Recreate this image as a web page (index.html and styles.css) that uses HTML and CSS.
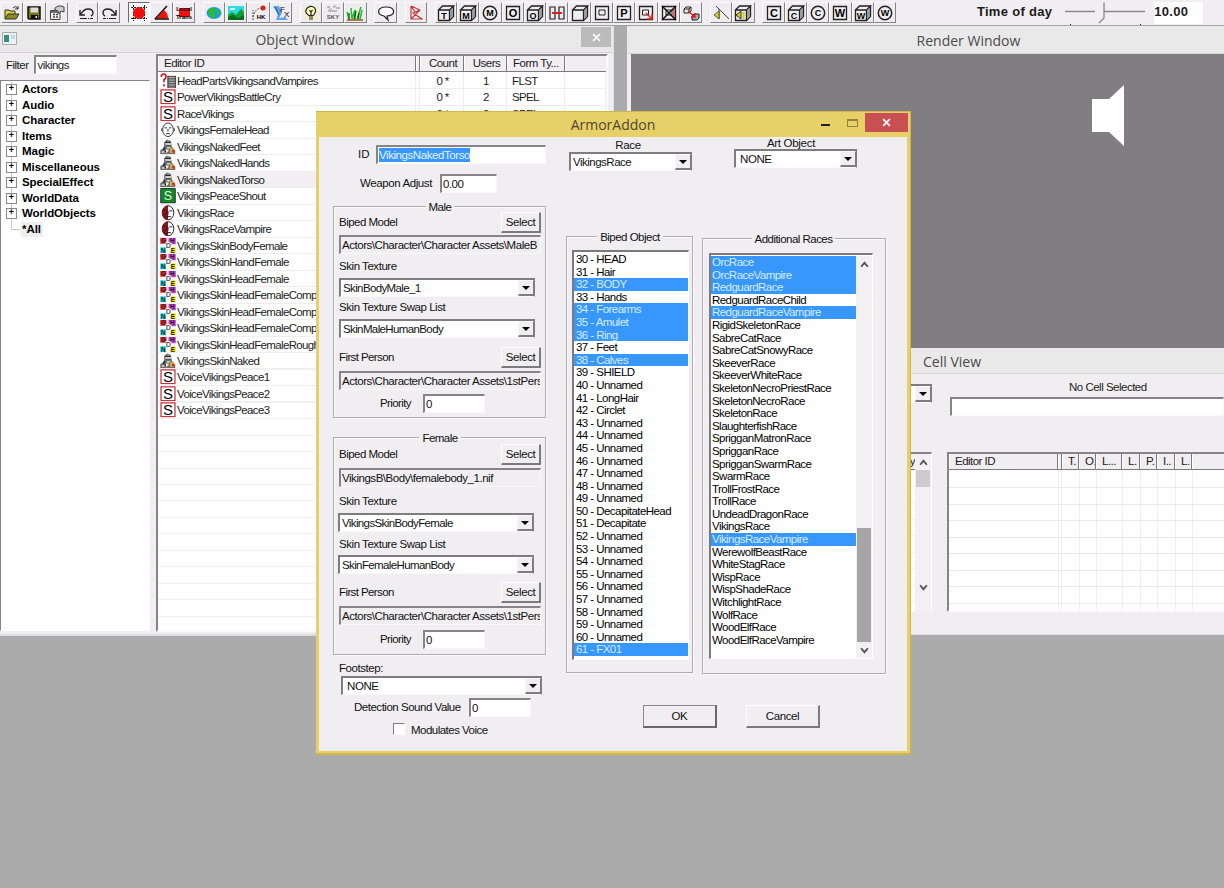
FILE: index.html
```html
<!DOCTYPE html>
<html lang="en">

<head>
    <meta charset="UTF-8">
    <meta name="viewport" content="width=device-width, initial-scale=1.0">
    <title>Creation Kit</title>
    <link rel="stylesheet" href="styles.css">
</head>

<body>
    <svg class="sprite">
        <symbol id="i-cube" viewBox="0 0 18 18"><path d="M1.500 6h11v10.500h-11zM1.500 6l4-4h11l-4 4M16.500 2v10.500l-4 4" fill="#eee" stroke="#222" stroke-width="1.300"/><path d="M13 6.500l3-3v8.500l-3 3z" fill="#999"/></symbol>
        <symbol id="i-box" viewBox="0 0 18 18"><path d="M2.500 2.500h13v13h-13z" fill="#eee" stroke="#222" stroke-width="1.300"/></symbol>
        <symbol id="i-ring" viewBox="0 0 18 18"><circle cx="9" cy="9" r="6.700" fill="#eee" stroke="#222" stroke-width="1.500"/></symbol>
        <symbol id="i-power" viewBox="0 0 16 16"><path d="M.8.800h14.400v14.400H.8z" fill="#fff" stroke="#c8323c" stroke-width="1.300"/><text x="8" y="13.500" font-size="15.500" text-anchor="middle">S</text></symbol>
        <symbol id="i-armor" viewBox="0 0 16 16"><path d="M0 15.500v-4l4-3V3l3-2.500L11 2l1 6 3.500 4v3.500z" fill="#6c6c6c"/><path d="M5 5l3-3.500L11 4v4l-3 3z" fill="#ccc"/><path d="M5.500 3.500h5M6 7h5M3 11l4 3M4 8v3" stroke="#222" stroke-width="1.300"/><path d="M1.500 12.500l3-1v3h-3z" fill="#bbb"/><path d="M6 10l3 2-3 3z" fill="#eee"/><path d="M10 9.500h4v5h-4z" fill="#d9b33c"/><path d="M12 11h2.500v3H12z" fill="#c33"/></symbol>
        <symbol id="i-race" viewBox="0 0 16 16"><ellipse cx="8" cy="8" rx="6" ry="7.300" fill="#fff" stroke="#222"/><path d="M8 .7C0 1 0 15 8 15.300z" fill="#8c1016"/><path d="M3.500 5l3 1M9.500 6h3M6 12h5M8 6v4M4 12l2-4" stroke="#222"/></symbol>
        <symbol id="i-tex" viewBox="0 0 16 16"><path d="M0 0h6.500v6H0z" fill="#e8202c"/><path d="M8.500 0H16v6.500H8.500z" fill="#c23ad0"/><path d="M0 9.500h6V16H0z" fill="#1fd8e8"/><path d="M10 9.500h6V16h-6z" fill="#f4e61c"/><path d="M5.500 4h6v7.500h-6z" fill="#fff"/><g font-size="6.500" font-weight="bold" text-anchor="middle" fill="#222"><text x="3" y="5.300">G</text><text x="12.500" y="5.500">H</text><text x="8.500" y="10" fill="#556" font-size="7.500">D</text><text x="3" y="15">N</text><text x="13" y="15">E</text></g></symbol>
        <symbol id="i-head" viewBox="0 0 16 16"><ellipse cx="8" cy="8" rx="5.500" ry="7" fill="#fff" stroke="#333"/><path d="M4.500 6h2.500M9 6h2.500M8 7v3M6 12h4M1.500 6.500v3M14.500 6.500v3" stroke="#333"/></symbol>
        <symbol id="i-list" viewBox="0 0 16 16"><path d="M7.500 3H16v13H7.500z" fill="#b5b5b5"/><path d="M7.500 3.500H16M7.500 6H16M7.500 8.500H16M7.500 11H16M7.500 13.500H16M7.500 15.500H16M8 3v13M15.500 3v13" stroke="#3a3a3a"/><path d="M1 4q0-3 2.500-3T6 3.500q0 2-2.200 3.500v2.500M3.800 11.500V14" fill="none" stroke="#e2141c" stroke-width="1.700"/></symbol>
        <symbol id="i-shout" viewBox="0 0 16 16"><path d="M.5.500h15v15H.5z" fill="#128a24" stroke="#234"/><text x="8" y="12.500" font-size="13" fill="#e8f5e8" text-anchor="middle">S</text></symbol>
    </svg>

    <div class="toolbar">
        <div class="tools">
            <button><svg viewBox="0 0 18 18"><path d="M2 15V6h4l1 1h5v3" fill="#d8d040" stroke="#333"/><path d="M2 15l3-5h11l-3 5z" fill="#8d8a20" stroke="#333"/><path d="M10 4q3-3 5 1M15 2v3h-3" fill="none" stroke="#333"/></svg></button>
            <button><svg viewBox="0 0 18 18"><path d="M3 3h12v12H4l-1-1z" fill="#777418" stroke="#111" stroke-width="1.500"/><path d="M5.500 3.500h7.500v5H5.500z" fill="#ddd"/><path d="M6 11h7v4H6z" fill="#111"/><path d="M10.500 12h1.500v2h-1.500z" fill="#eee"/></svg></button>
            <button><svg viewBox="0 0 18 18"><path d="M2.500 6.500h9.500v9H2.500z" fill="#eee" stroke="#444"/><path d="M3 8h9M5 10.500h2M8 10.500h2M5 13h2M8 13h2" stroke="#444" stroke-width="1.400"/><path d="M7 4l3-2h3l3 1v5l-3-1-2 3-1-3-3-1z" fill="#ccc" stroke="#444"/></svg></button>
        </div>
        <div class="tools">
            <button><svg viewBox="0 0 18 18"><path d="M2 6v5h5M3 10q3-5 7-5 5 0 5 4 0 2-2 3" fill="none" stroke="#222" stroke-width="1.400"/><path d="M2 14.500h13" stroke="#222" stroke-dasharray="7 1 1 1"/></svg></button>
            <button><svg viewBox="0 0 18 18"><path d="M16 6v5h-5M15 10q-3-5-7-5-5 0-5 4 0 2 2 3" fill="none" stroke="#222" stroke-width="1.400"/><path d="M16 14.500H3" stroke="#222" stroke-dasharray="7 1 1 1"/></svg></button>
        </div>
        <div class="tools">
            <button class="pressed"><svg viewBox="0 0 18 18"><path d="M3.500 1v16M14.500 1v16M1 3.500h16M1 14.500h16" stroke="#222" stroke-dasharray="2 1"/><circle cx="9" cy="9" r="6" fill="#f11010"/></svg></button>
            <button><svg viewBox="0 0 18 18"><path d="M2 15L14 2" stroke="#111" stroke-width="1.500"/><path d="M3 14.500L11 6q4 3 4 8.500z" fill="#f11010"/><path d="M2 15h14" stroke="#111" stroke-width="1.500"/></svg></button>
            <button><svg viewBox="0 0 18 18"><path d="M4 4h11v9H4z" fill="#f11010"/><text x="9" y="7" class="tiny">Local</text><text x="9" y="15" class="tiny">Trans</text></svg></button>
        </div>
        <div class="tools">
            <button><svg viewBox="0 0 18 18"><ellipse cx="9" cy="9" rx="7.500" ry="6" fill="#2597dc"/><path d="M3 6l4-2 4 1-2 4 1 3-2 3-3-3zM12 6l3 1v4l-3-2z" fill="#25c322"/></svg></button>
            <button><svg viewBox="0 0 18 18"><path d="M1 2h16v14H1z" fill="#2bdde0"/><path d="M3 4h5v2H3z" fill="#d8ffff"/><path d="M1 11l4-3 4 3 5-6 3 3v8H1z" fill="#169a34"/><path d="M1 13l5-2 5 3 6-3v5H1z" fill="#0b6b1c"/></svg></button>
            <button><svg viewBox="0 0 18 18"><path d="M3 16V6M3 13q2-9 9-9" fill="none" stroke="#555" stroke-dasharray="2 1"/><circle cx="13" cy="4" r="2.500" fill="#e01818"/><text x="11" y="15" class="tiny">HK</text></svg></button>
            <button><svg viewBox="0 0 18 18"><path d="M1 2h6l3 7-3 5 6-1 3 3H4l2-6z" fill="#5ea6e6"/><path d="M3 3l4 8" stroke="#2869c4" stroke-width="1.500"/><text x="8" y="8" font-size="8">F</text><text x="12" y="13" font-size="8">X</text></svg></button>
        </div>
        <div class="tools">
            <button><svg viewBox="0 0 18 18"><path d="M9 1v16M1 8h16M3 3l12 12M15 3L3 15" stroke="#f4ef8a" stroke-width="1.500"/><path d="M7 11.500q-4-2.500-3-5.500 2-4 6-3.500 4 1 3.500 5-.5 2.500-2.500 4z" fill="#fbf7b4" stroke="#222" stroke-width="1.200"/><path d="M7 13h4M7 15h4M7.500 6l1.500 2 1.500-2M9 8v4" fill="none" stroke="#222" stroke-width="1.200"/></svg></button>
            <button><svg viewBox="0 0 18 18"><path d="M3 3h3M9 3l3-1M12 4h4M5 5l3 1M4 7h9" stroke="#bbb" stroke-width="2"/><text x="9" y="15" class="tiny" fill="#555">SKY</text></svg></button>
            <button><svg viewBox="0 0 18 18"><path d="M1 8l2 7M5 4l1 11 3-9v9M11 15l4-12M14 15l2-9" fill="none" stroke="#26b82a" stroke-width="1.500"/><path d="M3 16V9M8 16l2-9M12 16l1-7" stroke="#0a6d14" stroke-width="1.400"/><path d="M1 16h16" stroke="#9b5a20" stroke-width="1.500"/></svg></button>
        </div>
        <div class="tools">
            <button><svg viewBox="0 0 18 18"><path d="M9 3c10 0 10 9 1 9l1 4-4-4C-1 11 0 3 9 3z" fill="#fff" stroke="#222" stroke-width="1.200"/></svg></button>
        </div>
        <div class="tools">
            <button><svg viewBox="0 0 18 18"><path d="M4 2v13h12M4 2l9 4M4 15l9-9-7 3 9 6M4 2l4 6" fill="none" stroke="#c23a3a" stroke-width="1.200"/></svg></button>
        </div>
        <div class="tools">
            <button><svg viewBox="0 0 18 18"><use href="#i-cube"/><text x="7" y="14.500">T</text></svg></button>
            <button><svg viewBox="0 0 18 18"><use href="#i-cube"/><text x="7" y="14.500">M</text></svg></button>
            <button><svg viewBox="0 0 18 18"><use href="#i-ring"/><text x="9" y="12.300">M</text></svg></button>
            <button><svg viewBox="0 0 18 18"><use href="#i-box"/><text x="9" y="13" class="big">O</text></svg></button>
            <button><svg viewBox="0 0 18 18"><use href="#i-cube"/><text x="7" y="14.500">O</text></svg></button>
            <button><svg viewBox="0 0 18 18"><path d="M2 3h5v12H2zM11 3h5v12h-5z" fill="#eee" stroke="#222" stroke-width="1.200"/><path d="M4 9h10" stroke="#e02020" stroke-width="2"/></svg></button>
            <button><svg viewBox="0 0 18 18"><use href="#i-cube"/></svg></button>
            <button><svg viewBox="0 0 18 18"><use href="#i-box"/><path d="M6 6h6v5H6z" fill="none" stroke="#222"/></svg></button>
            <button><svg viewBox="0 0 18 18"><use href="#i-box"/><text x="9" y="13" class="big">P</text></svg></button>
            <button><svg viewBox="0 0 18 18"><use href="#i-box"/><path d="M5.500 6h6v5h-6z" fill="none" stroke="#222"/><path d="M9 9l6 6M15 10v5h-5" fill="none" stroke="#e02020" stroke-width="1.400"/></svg></button>
            <button><svg viewBox="0 0 18 18"><use href="#i-box"/><path d="M6 6h6v5H6z" fill="none" stroke="#222"/><path d="M14 5v9" stroke="#d66" stroke-width="2"/><path d="M2 2l14 14M16 2L2 16" stroke="#111" stroke-width="1.500"/></svg></button>
            <button><svg viewBox="0 0 18 18"><path d="M2 5l2-2h5v4L7 9H2zM2 5h5v4M7 5l2-2" fill="#eee" stroke="#222"/><path d="M10 12l2-2h5v4l-2 2h-5z" fill="#aaa" stroke="#222"/><path d="M6 7l7 6M13 9v4H9" fill="none" stroke="#e02020" stroke-width="1.400"/></svg></button>
        </div>
        <div class="tools">
            <button><svg viewBox="0 0 18 18"><path d="M4 2l13 13M7 5v10" stroke="#444"/><path d="M2 11l5-4v8z" fill="#d8cb1c" stroke="#333" stroke-width=".7"/></svg></button>
            <button><svg viewBox="0 0 18 18"><use href="#i-cube"/><path d="M2 11l5-4v8z" fill="#d8cb1c" stroke="#333"/><path d="M9.500 8v7" stroke="#d8cb1c" stroke-width="2"/></svg></button>
        </div>
        <div class="tools">
            <button><svg viewBox="0 0 18 18"><use href="#i-box"/><text x="9" y="13" class="big">C</text></svg></button>
            <button><svg viewBox="0 0 18 18"><use href="#i-cube"/><text x="7" y="14.500">C</text></svg></button>
            <button><svg viewBox="0 0 18 18"><use href="#i-ring"/><text x="9" y="12.300">C</text></svg></button>
            <button><svg viewBox="0 0 18 18"><use href="#i-box"/><text x="9" y="13" class="big">W</text></svg></button>
            <button><svg viewBox="0 0 18 18"><use href="#i-cube"/><text x="7" y="14.500">W</text></svg></button>
            <button><svg viewBox="0 0 18 18"><use href="#i-ring"/><text x="9" y="12.300">W</text></svg></button>
        </div>
        <div class="time">
            <span>Time of day</span>
            <svg class="slider" viewBox="0 0 80 25"><path d="M0 11.500h80" stroke="#8a8a8a" stroke-width="1.500"/><path d="M5.500 24v1M75.500 24v1" stroke="#222"/><path d="M30 2.500h9V18l-5 5-4-4z" fill="#f0eff1"/><path d="M39 2.500V18l-5 5" fill="none" stroke="#888" stroke-width="1.300"/></svg>
            <span class="timeValue">10.00</span>
        </div>
    </div>

    <!-- object window -->
    <div class="window objectWindow">
        <div class="titlebar">
            <svg class="appIcon" viewBox="0 0 15 13"><path d="M.5.500h14v12H.5z" fill="#eaf3f3" stroke="#aaa"/><path d="M2 3h5v7H2z" fill="#3c8c84"/><path d="M9 3h4v4H9z" fill="#c5d5e6"/></svg>
            <span>Object Window</span>
            <button class="closeGray"><svg viewBox="0 0 8 8"><path d="M1 1l6 6M7 1L1 7" stroke="#fff" stroke-width="1.300"/></svg></button>
        </div>
        <div class="objectBody">
            <div class="side">
                <label class="filter">Filter <input type="text" value="vikings"></label>
                <ul class="tree">
                    <li>Actors</li>
                    <li>Audio</li>
                    <li>Character</li>
                    <li>Items</li>
                    <li>Magic</li>
                    <li>Miscellaneous</li>
                    <li>SpecialEffect</li>
                    <li>WorldData</li>
                    <li>WorldObjects</li>
                    <li class="all"><span>*All</span></li>
                </ul>
            </div>
            <div class="grid objects">
                <div class="row head"><span>Editor ID</span><span></span><span>Count</span><span>Users</span><span>Form Ty...</span><span></span></div>
                <div class="row"><span><svg><use href="#i-list"/></svg>HeadPartsVikingsandVampires</span><span></span><span>0 *</span><span>1</span><span>FLST</span><span></span></div>
                <div class="row"><span><svg><use href="#i-power"/></svg>PowerVikingsBattleCry</span><span></span><span>0 *</span><span>2</span><span>SPEL</span><span></span></div>
                <div class="row"><span><svg><use href="#i-power"/></svg>RaceVikings</span><span></span><span>0 *</span><span>2</span><span>SPEL</span><span></span></div>
                <div class="row"><span><svg><use href="#i-head"/></svg>VikingsFemaleHead</span></div>
                <div class="row"><span><svg><use href="#i-armor"/></svg>VikingsNakedFeet</span></div>
                <div class="row"><span><svg><use href="#i-armor"/></svg>VikingsNakedHands</span></div>
                <div class="row current"><span><svg><use href="#i-armor"/></svg>VikingsNakedTorso</span></div>
                <div class="row"><span><svg><use href="#i-shout"/></svg>VikingsPeaceShout</span></div>
                <div class="row"><span><svg><use href="#i-race"/></svg>VikingsRace</span></div>
                <div class="row"><span><svg><use href="#i-race"/></svg>VikingsRaceVampire</span></div>
                <div class="row"><span><svg><use href="#i-tex"/></svg>VikingsSkinBodyFemale</span></div>
                <div class="row"><span><svg><use href="#i-tex"/></svg>VikingsSkinHandFemale</span></div>
                <div class="row"><span><svg><use href="#i-tex"/></svg>VikingsSkinHeadFemale</span></div>
                <div class="row"><span><svg><use href="#i-tex"/></svg>VikingsSkinHeadFemaleComp</span></div>
                <div class="row"><span><svg><use href="#i-tex"/></svg>VikingsSkinHeadFemaleComp</span></div>
                <div class="row"><span><svg><use href="#i-tex"/></svg>VikingsSkinHeadFemaleComp</span></div>
                <div class="row"><span><svg><use href="#i-tex"/></svg>VikingsSkinHeadFemaleRough</span></div>
                <div class="row"><span><svg><use href="#i-armor"/></svg>VikingsSkinNaked</span></div>
                <div class="row"><span><svg><use href="#i-power"/></svg>VoiceVikingsPeace1</span></div>
                <div class="row"><span><svg><use href="#i-power"/></svg>VoiceVikingsPeace2</span></div>
                <div class="row"><span><svg><use href="#i-power"/></svg>VoiceVikingsPeace3</span></div>
            </div>
        </div>
    </div>

    <!-- render window -->
    <div class="window renderWindow">
        <div class="titlebar"><span>Render Window</span></div>
        <div class="viewport">
            <svg class="speaker" viewBox="0 0 32 61"><path d="M0 14h17L32 0v61L17 47H0z" fill="#fff"/></svg>
        </div>
    </div>

    <!-- cell view -->
    <div class="window cellWindow">
        <div class="titlebar"><span>Cell View</span></div>
        <div class="cellBody">
            <div class="worlds">
                <div class="combo"><span></span><i></i></div>
                <div class="worldList">
                    <div class="worldRows"><div class="worldHead">y</div></div>
                    <div class="scroll">
                        <svg viewBox="0 0 8 6"><path d="M1 5l3-3.500L7 5"/></svg>
                        <div class="thumb"></div>
                        <svg viewBox="0 0 8 6"><path d="M1 1l3 3.500L7 1"/></svg>
                    </div>
                </div>
            </div>
            <div class="cells">
                <div class="noCell">No Cell Selected</div>
                <input type="text">
                <div class="grid refs">
                    <div class="row head"><span>Editor ID</span><span></span><span>T.</span><span>O.</span><span>L...</span><span>L.</span><span>P.</span><span>I..</span><span>L.</span><span></span></div>
                </div>
            </div>
        </div>
    </div>

    <!-- armor addon dialog -->
    <div class="dialog">
        <div class="dialogTitle">
            <span>ArmorAddon</span>
            <div class="caption">
                <i class="min"></i>
                <i class="max"></i>
                <button class="close"><svg viewBox="0 0 8 8"><path d="M1 1l6 6M7 1L1 7" stroke="#fff" stroke-width="1.500"/></svg></button>
            </div>
        </div>
        <div class="client">
            <div class="left">
                <div class="line idLine"><label>ID</label><div class="field"><mark>VikingsNakedTorso</mark></div></div>
                <div class="line weapon"><label>Weapon Adjust</label><input type="text" value="0.00"></div>

                <div class="group male">
                    <div class="legend"><span>Male</span></div>
                    <div class="pick"><span>Biped Model</span><button>Select</button></div>
                    <div class="path">Actors\Character\Character Assets\MaleB</div>
                    <div class="caps">Skin Texture</div>
                    <div class="combo"><span>SkinBodyMale_1</span><i></i></div>
                    <div class="caps swap">Skin Texture Swap List</div>
                    <div class="combo"><span>SkinMaleHumanBody</span><i></i></div>
                    <div class="pick first"><span>First Person</span><button>Select</button></div>
                    <div class="path">Actors\Character\Character Assets\1stPers</div>
                    <div class="line priority"><label>Priority</label><input type="text" value="0"></div>
                </div>

                <div class="group female">
                    <div class="legend"><span>Female</span></div>
                    <div class="pick"><span>Biped Model</span><button>Select</button></div>
                    <div class="path">VikingsB\Body\femalebody_1.nif</div>
                    <div class="caps">Skin Texture</div>
                    <div class="combo"><span>VikingsSkinBodyFemale</span><i></i></div>
                    <div class="caps swap">Skin Texture Swap List</div>
                    <div class="combo"><span>SkinFemaleHumanBody</span><i></i></div>
                    <div class="pick first"><span>First Person</span><button>Select</button></div>
                    <div class="path">Actors\Character\Character Assets\1stPers</div>
                    <div class="line priority"><label>Priority</label><input type="text" value="0"></div>
                </div>

                <div class="caps footCaps">Footstep:</div>
                <div class="combo foot"><span>NONE</span><i></i></div>
                <div class="line detect"><label>Detection Sound Value</label><input type="text" value="0"></div>
                <div class="line voice"><b class="check"></b><label>Modulates Voice</label></div>
            </div>

            <div class="right">
                <div class="lists">
                    <div class="mid">
                        <div class="caps">Race</div>
                        <div class="combo"><span>VikingsRace</span><i></i></div>
                        <div class="group biped">
                            <div class="legend"><span>Biped Object</span></div>
                            <ul class="listbox">
                                <li>30 - HEAD</li>
                                <li>31 - Hair</li>
                                <li class="on">32 - BODY</li>
                                <li>33 - Hands</li>
                                <li class="on">34 - Forearms</li>
                                <li class="on">35 - Amulet</li>
                                <li class="on">36 - Ring</li>
                                <li>37 - Feet</li>
                                <li class="on">38 - Calves</li>
                                <li>39 - SHIELD</li>
                                <li>40 - Unnamed</li>
                                <li>41 - LongHair</li>
                                <li>42 - Circlet</li>
                                <li>43 - Unnamed</li>
                                <li>44 - Unnamed</li>
                                <li>45 - Unnamed</li>
                                <li>46 - Unnamed</li>
                                <li>47 - Unnamed</li>
                                <li>48 - Unnamed</li>
                                <li>49 - Unnamed</li>
                                <li>50 - DecapitateHead</li>
                                <li>51 - Decapitate</li>
                                <li>52 - Unnamed</li>
                                <li>53 - Unnamed</li>
                                <li>54 - Unnamed</li>
                                <li>55 - Unnamed</li>
                                <li>56 - Unnamed</li>
                                <li>57 - Unnamed</li>
                                <li>58 - Unnamed</li>
                                <li>59 - Unnamed</li>
                                <li>60 - Unnamed</li>
                                <li class="on">61 - FX01</li>
                            </ul>
                        </div>
                    </div>
                    <div class="far">
                        <div class="caps">Art Object</div>
                        <div class="combo"><span>NONE</span><i></i></div>
                        <div class="group races">
                            <div class="legend"><span>Additional Races</span></div>
                            <div class="listbox">
                                <ul>
                                    <li class="on">OrcRace</li>
                                    <li class="on">OrcRaceVampire</li>
                                    <li class="on">RedguardRace</li>
                                    <li>RedguardRaceChild</li>
                                    <li class="on">RedguardRaceVampire</li>
                                    <li>RigidSkeletonRace</li>
                                    <li>SabreCatRace</li>
                                    <li>SabreCatSnowyRace</li>
                                    <li>SkeeverRace</li>
                                    <li>SkeeverWhiteRace</li>
                                    <li>SkeletonNecroPriestRace</li>
                                    <li>SkeletonNecroRace</li>
                                    <li>SkeletonRace</li>
                                    <li>SlaughterfishRace</li>
                                    <li>SprigganMatronRace</li>
                                    <li>SprigganRace</li>
                                    <li>SprigganSwarmRace</li>
                                    <li>SwarmRace</li>
                                    <li>TrollFrostRace</li>
                                    <li>TrollRace</li>
                                    <li>UndeadDragonRace</li>
                                    <li>VikingsRace</li>
                                    <li class="on">VikingsRaceVampire</li>
                                    <li>WerewolfBeastRace</li>
                                    <li>WhiteStagRace</li>
                                    <li>WispRace</li>
                                    <li>WispShadeRace</li>
                                    <li>WitchlightRace</li>
                                    <li>WolfRace</li>
                                    <li>WoodElfRace</li>
                                    <li>WoodElfRaceVampire</li>
                                </ul>
                                <div class="scroll">
                                    <svg viewBox="0 0 8 6"><path d="M1 5l3-3.500L7 5"/></svg>
                                    <div class="thumb"></div>
                                    <svg viewBox="0 0 8 6"><path d="M1 1l3 3.500L7 1"/></svg>
                                </div>
                            </div>
                        </div>
                    </div>
                </div>
                <div class="buttons">
                    <button class="ok">OK</button>
                    <button>Cancel</button>
                </div>
            </div>
        </div>
    </div>
</body>

</html>
```
FILE: styles.css
```css
* {
    margin: 0;
    padding: 0;
    box-sizing: border-box;
}

body {
    width: 1224px;
    height: 888px;
    overflow: hidden;
    position: relative;
    background-color: #ababab;
    color: #1c1c1c;
    font-family: "Liberation Sans", Arial, sans-serif;
    font-size: 11.5px;
    letter-spacing: -0.52px;
    white-space: nowrap;
}

ul {
    list-style: none;
}

input,
button {
    font: inherit;
    letter-spacing: inherit;
    color: inherit;
    border-radius: 0;
}

.sprite {
    display: none;
}

input,
.field,
.path {
    height: 19px;
    padding: 0 1px;
    background-color: #fff;
    border: 2px solid;
    border-color: #868487 #f8f8f8 #f8f8f8 #868487;
    border-right-width: 1px;
    border-bottom-width: 1px;
    line-height: 16px;
    outline: none;
}

/* toolbar */
.toolbar {
    height: 26px;
    display: flex;
    gap: 7.8px;
    padding: 2px 0 0 1px;
    background-color: #f0eef1;
    border-bottom: 1px solid #a2a0a3;
}

.tools {
    display: flex;
}

.tools button {
    width: 22.3px;
    height: 21px;
    display: flex;
    align-items: center;
    justify-content: center;
    background-color: #eeecef;
    border: 1px solid;
    border-color: #fcfcfc #858386 #858386 #fcfcfc;
    border-right-width: 1.5px;
    border-bottom-width: 1.5px;
}

.tools .pressed {
    background-color: #f7f6f7;
    border-color: #6f6d70 #fff #fff #6f6d70;
}

.tools svg {
    width: 18px;
    height: 18px;
    flex: none;
}

.tools text {
    letter-spacing: 0;
}

.tools text:not([font-size]) {
    font-size: 9px;
    font-weight: bold;
    text-anchor: middle;
}

.tools text.big {
    font-size: 11px;
}

.tools text.tiny {
    font-size: 6px;
}

.time {
    display: flex;
    margin: -2px 0 0 73px;
    font-size: 13px;
    font-weight: bold;
    letter-spacing: 0.3px;
    line-height: 23px;
}

.slider {
    width: 80px;
    height: 25px;
    margin: 0 9px 0 13px;
}

.timeValue {
    width: 49px;
    margin-top: 2px;
    height: 22px;
    line-height: 19px;
    background-color: #fff;
}

/* windows */
.window {
    position: absolute;
    background-color: #f0eef1;
}

.titlebar {
    height: 27px;
    position: relative;
    background-color: #eae9ea;
    border-bottom: 1px solid #d5d4d5;
    color: #4b4a4b;
    font-family: "Open Sans", sans-serif;
    font-size: 14px;
    letter-spacing: 0;
    line-height: 27px;
    text-align: center;
}

.appIcon {
    position: absolute;
    left: 2px;
    top: 6px;
    width: 15px;
    height: 13px;
}

.closeGray {
    position: absolute;
    right: 2px;
    top: 1px;
    width: 30px;
    height: 20px;
    border: none;
    background-color: #bcbbbc;
    line-height: 0;
}

.closeGray svg {
    width: 9px;
    height: 9px;
}

.objectWindow {
    left: 0;
    top: 26px;
    width: 614px;
    height: 610px;
    border-right: 1px solid #e2e1e3;
    border-bottom: 2px solid #dddcde;
}

.objectWindow .titlebar {
    padding-right: 3px;
}

.objectBody {
    display: flex;
    gap: 6px;
}

.side {
    width: 150px;
}

.filter {
    display: flex;
    align-items: center;
    gap: 6px;
    height: 23px;
    padding-left: 6px;
}

.filter input {
    width: 83px;
}

.tree {
    height: 551px;
    margin-top: 4px;
    padding-top: 1px;
    border: 1px solid;
    border-color: #868487 #fff #fff #868487;
    background-color: #fff;
    color: #000;
    font-weight: bold;
    letter-spacing: -0.05px;
}

.tree li {
    height: 15.5px;
    line-height: 15.5px;
    display: flex;
    align-items: center;
    background: linear-gradient(#c8c8c8, #c8c8c8) 10px 0 / 1px 100% no-repeat;
}

.tree li::before {
    content: "+";
    width: 9px;
    height: 9px;
    margin: 0 5px;
    border: 1px solid #8a8a8a;
    background-color: #fff;
    font-size: 9px;
    letter-spacing: 0;
    line-height: 7px;
    text-align: center;
}

.tree li.all {
    background-size: 1px 50%;
}

.tree li.all::before {
    content: "";
    width: 9px;
    height: 1px;
    border: none;
    margin: 0 1px 0 10px;
    background-color: #c8c8c8;
}

.tree .all span {
    background-color: #f0eff0;
    padding: 0 2px 0 1px;
}

.grid {
    background-color: #fff;
    border: 2px solid;
    border-color: #868487 #fbfafb #fbfafb #868487;
    overflow: hidden;
}

.row {
    display: grid;
    height: 16.48px;
    line-height: 16px;
    border-bottom: 1px solid #efedf0;
}

.row > span {
    overflow: hidden;
    border-right: 1px solid #efedf0;
}

.row.head {
    height: 16px;
    background-color: #f0eef1;
    border-bottom: 1px solid #7c7a7d;
}

.row.head > span {
    border-right-color: #7c7a7d;
    border-left: 1px solid #fff;
    line-height: 14px;
}

.row.head > span:last-child {
    border-right: none;
}

.objects {
    width: 452px;
    height: 578px;
    margin-top: 1px;
    background-image: repeating-linear-gradient(transparent 0 15.48px, #f1eff2 15.48px 16.48px);
    background-position: 0 17px;
    letter-spacing: -0.64px;
}

.objects .row {
    grid-template-columns: 258px 4px 44px 43px 58px 1fr;
}

.objects .head {
    margin-bottom: 1px;
    letter-spacing: -0.5px;
}

.objects .row > span {
    padding-left: 5px;
}

.objects .row > span:nth-child(2) {
    padding: 0;
}

.objects .row:not(.head) > span:first-child {
    display: flex;
    padding-left: 2px;
    gap: 1px;
}

.objects .row > span:nth-child(3),
.objects .row > span:nth-child(4) {
    padding-left: 2px;
    text-align: center;
}

.objects svg {
    width: 16px;
    height: 15.5px;
    flex: none;
    letter-spacing: 0;
}

.objects .current {
    background-color: #f1eff2;
}

/* render window */
.renderWindow {
    left: 627px;
    top: 26px;
    width: 597px;
    height: 322px;
}

.renderWindow .titlebar {
    padding-left: 86px;
    height: 28px;
    line-height: 29px;
}

.viewport {
    height: 294px;
    margin-left: 4px;
    background-color: #807e80;
    display: flex;
    justify-content: flex-end;
    padding: 31px 100px 0 0;
}

.speaker {
    width: 32px;
    height: 61px;
}

/* cell view */
.cellWindow {
    left: 627px;
    top: 348px;
    width: 597px;
    height: 287px;
    border-bottom: 1px solid #dddcde;
}

.cellWindow .titlebar {
    padding-left: 53px;
    height: 26px;
}

.cellBody {
    display: flex;
    padding-left: 4px;
}

.worlds {
    flex: none;
    width: 301px;
    margin-right: 15px;
    padding-top: 10px;
}

.worldList {
    display: flex;
    height: 160px;
    margin-top: 49px;
    border-top: 2px solid #868487;
    border-right: 1px solid #fff;
}

.worldRows {
    flex: 1;
    background: repeating-linear-gradient(#fff 0 15.5px, #f1eff2 15.5px 16.5px);
}

.worldHead {
    height: 16px;
    line-height: 14px;
    text-align: right;
    background-color: #f0eef1;
    border-bottom: 1px solid #7c7a7d;
}

.scroll {
    width: 16px;
    display: flex;
    flex-direction: column;
    align-items: center;
    background-color: #f2f0f3;
}

.scroll svg {
    width: 9px;
    height: 7px;
    fill: none;
    stroke: #555;
    stroke-width: 1.7;
}

.worldList .scroll svg:first-child {
    margin: 5px 0 4px;
}

.worldList .thumb {
    width: 14px;
    height: 17px;
    background-color: #cdcbce;
    margin-bottom: 97px;
}

.cells {
    flex: 1;
    min-width: 0;
    padding-top: 6px;
}

.noCell {
    height: 17px;
    line-height: 15px;
    padding-left: 122px;
    letter-spacing: -0.5px;
}

.cells input {
    display: block;
    width: 274px;
    margin-left: 3px;
}

.refs {
    height: 160px;
    margin-top: 36px;
    border-right: none;
    background-image: repeating-linear-gradient(transparent 0 15.48px, #eae8eb 15.48px 16.48px),
        linear-gradient(to right, transparent 109px, #efedf0 109px 110px, transparent 110px 112px, #efedf0 112px 113px, transparent 113px 130px, #efedf0 130px 131px, transparent 131px 147px, #efedf0 147px 148px, transparent 148px 173px, #efedf0 173px 174px, transparent 174px 191px, #efedf0 191px 192px, transparent 192px 208px, #efedf0 208px 209px, transparent 209px 226px, #efedf0 226px 227px, transparent 227px 243px, #efedf0 243px 244px, transparent 244px);
    background-position: 0 18px, 0 0;
}

.refs .row {
    grid-template-columns: 109px 4px 17px 17px 26px 18px 17px 18px 17px 1fr;
}

.refs .head > span {
    padding-left: 5px;
}

.refs .head > span:nth-child(2) {
    padding: 0;
}

/* combos */
.combo {
    height: 19px;
    display: flex;
    background-color: #fff;
    border: 2px solid;
    border-color: #7e7c7f #f8f8f8 #f8f8f8 #7e7c7f;
    border-right: 1px solid #7e7c7f;
    border-bottom-width: 1px;
}

.combo span {
    flex: 1;
    padding-left: 2px;
    line-height: 16px;
    letter-spacing: -0.62px;
}

.combo i {
    width: 16px;
    height: 16px;
    display: flex;
    align-items: center;
    justify-content: center;
    background-color: #f0eef1;
    border: 1px solid;
    border-color: #f8f8f8 #7e7c7f #7e7c7f #f8f8f8;
    border-bottom-width: 2px;
}

.combo i::before {
    content: "";
    border: 4px solid transparent;
    border-top: 4px solid #000;
    border-bottom: 0;
}

/* armor addon dialog */
.dialog {
    position: absolute;
    left: 316px;
    top: 111px;
    width: 595px;
    height: 644px;
    padding: 0 3px 3px;
    background-color: #e8d069;
    border: 1px solid #cdb552;
    border-width: 1px 1px 2px 0;
}

.dialogTitle {
    height: 25px;
    position: relative;
    color: #4d4730;
    font-family: "Open Sans", sans-serif;
    font-size: 14px;
    letter-spacing: 0;
    line-height: 26px;
    text-align: center;
}

.caption {
    position: absolute;
    right: -1px;
    top: 1px;
    display: flex;
}

.min {
    width: 9px;
    height: 2px;
    margin: 11px 17px 0 0;
    background-color: #222;
}

.max {
    width: 11px;
    height: 8px;
    margin: 6px 7px 0 0;
    border: 1px solid #958238;
    border-top-width: 2px;
}

.close {
    width: 43px;
    height: 19px;
    border: none;
    background-color: #c95052;
    line-height: 0;
}

.close svg {
    width: 9px;
    height: 9px;
}

.client {
    display: flex;
    gap: 20px;
    height: 614px;
    background-color: #f0eef1;
    color: #111;
}

.left {
    width: 227px;
    padding: 8px 0 0 14px;
}

.line {
    display: flex;
    height: 19px;
    line-height: 19px;
}

.idLine {
    padding-left: 25px;
}

.idLine label {
    width: 18px;
    letter-spacing: 0;
}

.idLine .field {
    width: 170px;
    line-height: 16px;
    letter-spacing: -0.43px;
}

mark {
    display: inline-block;
    height: 14px;
    margin-top: 1px;
    line-height: 14px;
    vertical-align: top;
    background-color: #3797fd;
    color: #e6f3ff;
}

.weapon {
    margin-top: 10px;
    padding-left: 27px;
}

.weapon label {
    width: 80px;
    letter-spacing: -0.4px;
}

.weapon input {
    width: 57px;
}

.group {
    position: relative;
    border: 1px solid #b0aeb1;
    box-shadow: 1px 1px #fbfafb, inset 1px 1px #fbfafb;
    padding: 5px 4px 0 5px;
}

.legend {
    position: absolute;
    left: 1px;
    right: 0;
    top: -7px;
    height: 14px;
    line-height: 14px;
    text-align: center;
}

.legend span {
    background-color: #f0eef1;
    padding: 0 3px;
}

.male {
    height: 212px;
    margin-top: 13px;
}

.female {
    height: 218px;
    margin-top: 19px;
    padding-top: 6px;
}

.pick {
    height: 21px;
    display: flex;
    justify-content: space-between;
    line-height: 20px;
}

.pick button,
.buttons button {
    width: 40px;
    background-color: #f0eef1;
    border: 1px solid;
    border-color: #fff #7c7a7d #7c7a7d #fff;
    border-right-width: 2px;
    border-bottom-width: 2px;
    letter-spacing: -0.4px;
}

.pick button {
    line-height: 16px;
}

.first {
    margin-top: 9px;
    letter-spacing: -0.6px;
}

.female .first {
    margin-top: 8px;
}

.path {
    margin-top: 2px;
    overflow: hidden;
    background-color: #f0eef1;
    letter-spacing: -0.46px;
}

.female .path,
.first + .path {
    margin-top: 3px;
}

.left .caps {
    height: 24px;
    line-height: 24px;
    letter-spacing: -0.45px;
}

.left .swap {
    height: 22px;
    line-height: 21px;
}

.female .caps {
    height: 26px;
    line-height: 28px;
}

.female .swap {
    height: 23px;
    line-height: 25px;
}

.group .combo {
    margin-right: 6px;
}

.female .combo {
    margin: 0 7px 0 -1px;
}

.priority {
    margin-top: 4px;
    padding-left: 41px;
}

.female .priority {
    margin-top: 5px;
}

.priority label {
    width: 43px;
    letter-spacing: -0.6px;
}

.priority input {
    width: 62px;
}

.left .footCaps {
    height: 21px;
    padding-left: 6px;
    line-height: 26px;
}

.foot {
    width: 201px;
    margin-left: 8px;
}

.foot span,
.far .combo span {
    padding-left: 4px;
    letter-spacing: -0.4px;
}

.detect {
    margin-top: 3px;
    padding-left: 21px;
}

.detect label {
    width: 115px;
    letter-spacing: -0.48px;
}

.detect input {
    width: 62px;
}

.voice {
    margin-top: 4px;
    padding-left: 60px;
}

.check {
    width: 12px;
    height: 12px;
    margin: 2px 6px 0 0;
    background-color: #fff;
    border: 1px solid;
    border-color: #7c7a7d #fff #fff #7c7a7d;
}

.lists {
    display: flex;
    gap: 9px;
}

.lists .caps {
    height: 12px;
    line-height: 11px;
    text-align: center;
    letter-spacing: -0.3px;
}

.mid {
    width: 127px;
    padding-top: 3px;
}

.mid > .caps {
    padding-right: 3px;
}

.mid > .combo {
    width: 123px;
    margin-left: 3px;
}

.mid > .combo span {
    letter-spacing: -0.5px;
}

.far {
    width: 184px;
    padding-top: 1px;
}

.far > .caps {
    padding-right: 6px;
}

.far > .combo {
    width: 123px;
    margin: -1px 0 0 32px;
}

.biped {
    height: 437px;
    margin-top: 65px;
    padding: 13px 3px 0 5px;
}

.races {
    height: 436px;
    margin-top: 70px;
    padding: 14px 12px 0 6px;
}

.races .legend {
    left: 0;
    right: 1px;
}

.listbox {
    height: 410px;
    padding-top: 1px;
    background-color: #fff;
    border: 1px solid;
    border-color: #7c7a7d #fff #fff #7c7a7d;
    border-left-width: 2px;
    border-top-width: 2px;
    letter-spacing: -0.55px;
    color: #000;
}

.listbox li {
    height: 12.6px;
    line-height: 12.6px;
    padding-left: 2px;
}

.races li {
    padding-left: 1px;
}

.listbox .on {
    background-color: #3797fd;
    color: #d5ecff;
}

.races .listbox {
    height: 406px;
    display: flex;
}

.races ul {
    flex: 1;
}

.races .scroll svg:first-child {
    margin: 5px 0 260px;
}

.races .thumb {
    width: 14px;
    height: 114px;
    margin-bottom: 5px;
    background-color: #a7a5a8;
}

.buttons {
    display: flex;
    gap: 29px;
    margin: 31px 0 0 77px;
}

.buttons button {
    width: 74px;
    height: 23px;
}

.buttons .ok {
    border-color: #8a888b #69676a #69676a #8a888b;
}
```
